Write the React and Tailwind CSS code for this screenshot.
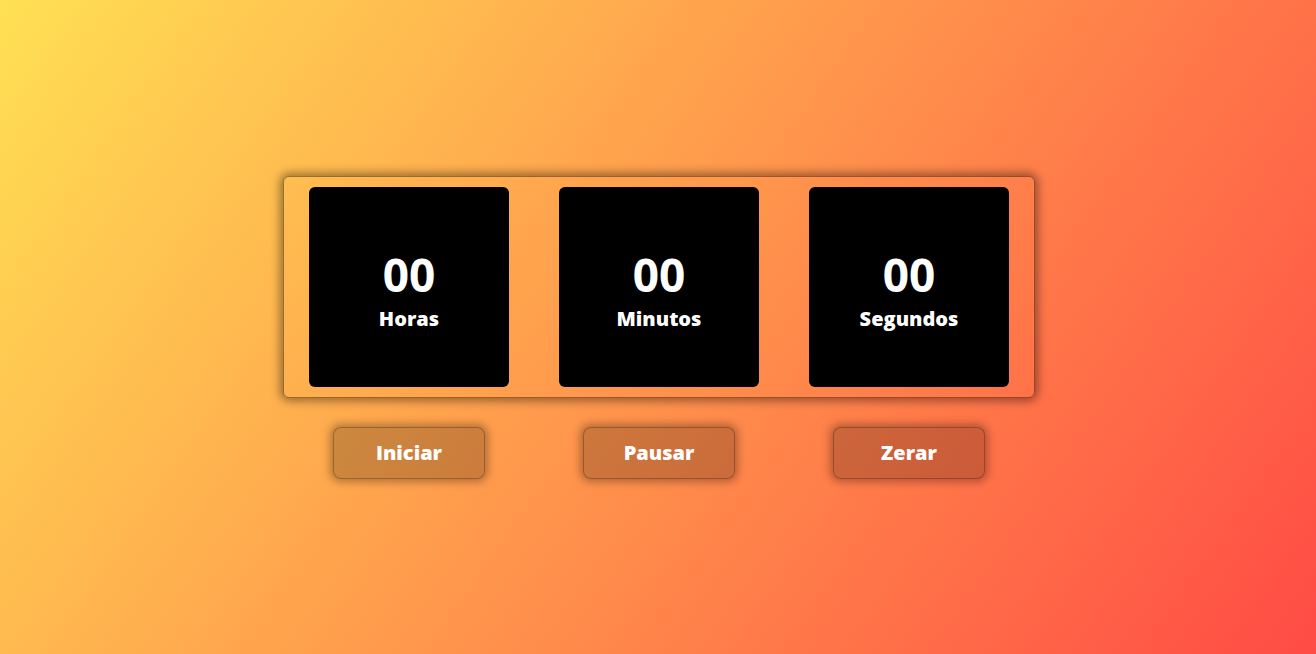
import React from 'react';

const units = [
  { value: '00', label: 'Horas' },
  { value: '00', label: 'Minutos' },
  { value: '00', label: 'Segundos' },
];

const actions = ['Iniciar', 'Pausar', 'Zerar'];

export default function App() {
  return (
    <div
      className="min-h-screen w-full flex flex-col items-center justify-center bg-[linear-gradient(125deg,#ffe053_0%,#ff4b45_100%)] text-white"
      style={{ fontFamily: '"Open Sans", "Liberation Sans", sans-serif' }}
    >
      <div className="flex gap-[50px] px-[25px] py-[10px] ml-[2px] rounded-md border border-black/40 shadow-[0_0_10px_3px_rgba(0,0,0,0.4)]">
        {units.map((u) => (
          <div
            key={u.label}
            className="w-[200px] h-[200px] bg-black rounded-md flex flex-col items-center justify-center pt-[7px]"
          >
            <span className="text-[46px] font-bold leading-[52px]">{u.value}</span>
            <span className="text-[20px] font-extrabold leading-[28px] mt-[5px]">{u.label}</span>
          </div>
        ))}
      </div>

      <div className="flex gap-[50px] px-[25px] mt-[29px] ml-[2px]">
        {actions.map((a) => (
          <div key={a} className="w-[200px] flex justify-center">
            <button className="w-[152px] h-[52px] rounded-lg bg-black/20 border border-black/25 shadow-[0_0_8px_3px_rgba(0,0,0,0.3)] text-[20px] font-extrabold text-white">
              {a}
            </button>
          </div>
        ))}
      </div>
    </div>
  );
}
